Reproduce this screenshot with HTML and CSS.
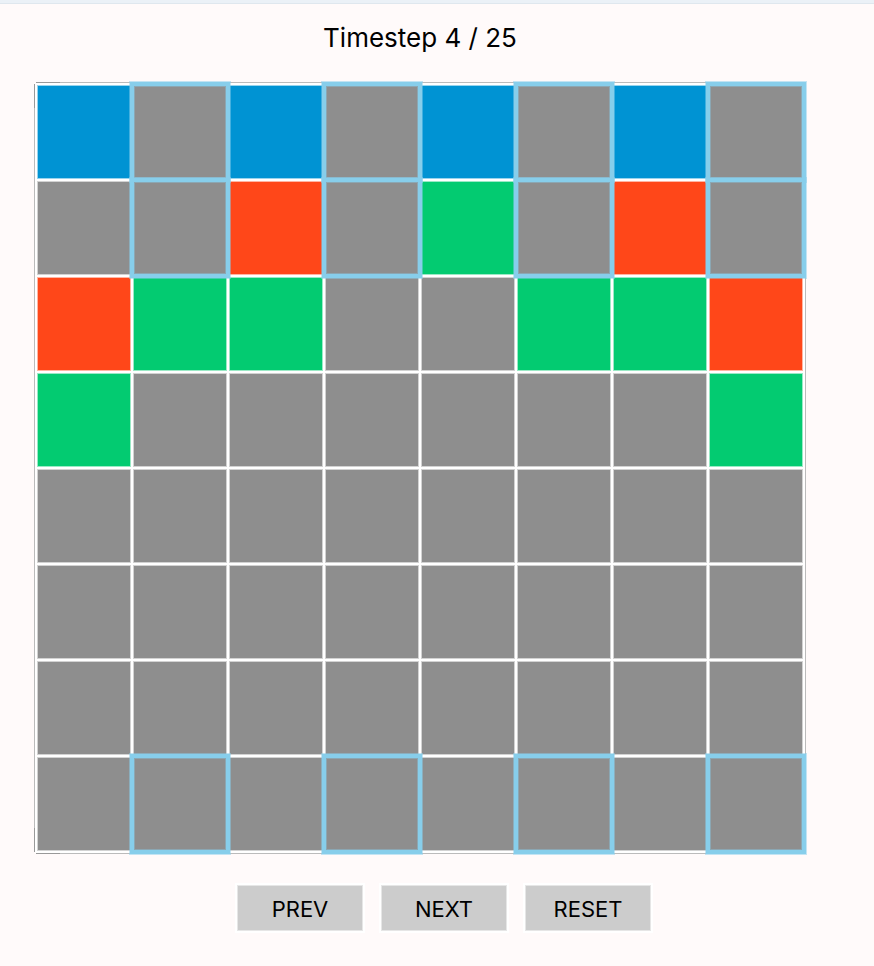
FILE: index.html
```html
<!DOCTYPE html>
<html lang="en">
<head>
<meta charset="utf-8">
<meta name="viewport" content="width=device-width, initial-scale=1">
<title>Timestep 4 / 25</title>
<link rel="stylesheet" href="styles.css">
</head>
<body>
<main class="page">
<h1 class="title">Timestep 4 / 25</h1>
<div class="board" id="board"></div>
<div class="controls">
<button type="button" class="control">PREV</button>
<button type="button" class="control">NEXT</button>
<button type="button" class="control">RESET</button>
</div>
</main>
<script src="board.js"></script>
</body>
</html>
```
FILE: styles.css
```css
* {
  box-sizing: border-box;
}

body {
  margin: 0;
  background: #fffafa;
  color: #000;
  font-family: Inter, "Liberation Sans", sans-serif;
  font-weight: 380;
}

.page {
  min-height: 100vh;
  border-top: 3px solid #ebf1f7;
  box-shadow: inset 0 1px #dfe7ee;
  padding: 14px 70px 33px 36px;
}

.title {
  margin: 0;
  font-size: 26px;
  font-weight: inherit;
  line-height: 41px;
  text-align: center;
}

.board {
  position: relative;
  display: grid;
  grid-template-columns: repeat(8, 1fr);
  grid-template-rows: repeat(8, 1fr);
  aspect-ratio: 1;
  margin-top: 26px;
  box-shadow: 0 0 0 1px #fff;
}

/* Hairline frame; its left end is darker for the first stretch of each side. */
.board::before {
  content: "";
  position: absolute;
  inset: -2px;
  background:
    linear-gradient(90deg, transparent 2px, #999 2px 26px, #bbb 26px) top / 100% 1px no-repeat,
    linear-gradient(90deg, transparent 2px, #999 2px 26px, #bbb 26px) bottom / 100% 1px no-repeat,
    linear-gradient(transparent 2px, #999 2px 26px, #bbb 26px calc(100% - 26px), #999 calc(100% - 26px) calc(100% - 2px), transparent calc(100% - 2px)) left / 1px 100% no-repeat,
    linear-gradient(#bbb, #bbb) right / 1px 100% no-repeat;
}

.cell {
  position: relative;
  background: #8e8e8e;
  box-shadow: inset 0 0 0 1px #fff, inset 0 0 0 2px rgba(255, 255, 255, .6);
}

.blue {
  background: #0093d3;
}

.green {
  background: #03cb71;
}

.red {
  background: #ff4719;
}

.marked {
  z-index: 1;
  box-shadow:
    inset 0 0 0 2px #87ceeb,
    inset 0 0 0 3px rgba(135, 206, 235, .4),
    0 0 0 2px #87ceeb,
    0 0 0 3px rgba(135, 206, 235, .5);
}

.controls {
  display: flex;
  justify-content: center;
  gap: 16px;
  margin-top: 32px;
  padding-left: 48px;
}

.control {
  width: 128px;
  height: 48px;
  border: 1px solid #fff;
  padding: 2px 0 0;
  background: #ccc;
  box-shadow: 0 0 0 1px #fff, inset 0 0 0 1px #e6e6e6;
  color: inherit;
  font: inherit;
  font-size: 22px;
}
```
FILE: board.js
```js
// B, R, G: coloured cells; ".": empty. A "*" after the letter marks the cell.
const rows = [
  "B .* B .* B .* B .*",
  ". .* R .* G .* R .*",
  "R G G . . G G R",
  "G . . . . . . G",
  ". . . . . . . .",
  ". . . . . . . .",
  ". . . . . . . .",
  ". .* . .* . .* . .*"
];
const colours = { B: "blue", R: "red", G: "green" };
const board = document.getElementById("board");

for (const row of rows) {
  for (const code of row.split(" ")) {
    const cell = document.createElement("div");
    cell.className = "cell";
    if (colours[code[0]]) cell.classList.add(colours[code[0]]);
    if (code[1] === "*") cell.classList.add("marked");
    board.append(cell);
  }
}
```
